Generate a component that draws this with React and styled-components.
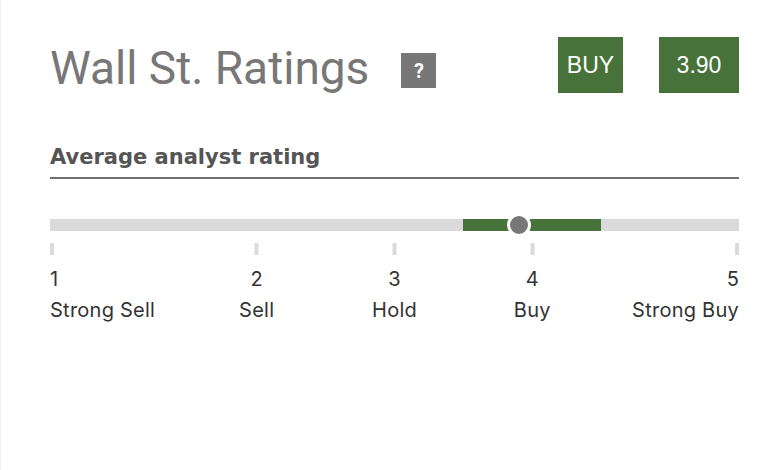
import React from "react";
import styled, { createGlobalStyle } from "styled-components";

// WALL ST. RATINGS CARD

const GlobalStyle = createGlobalStyle`
  html, body {
    margin: 0;
    padding: 0;
    background: #ffffff;
  }
  #root {
    min-height: 100vh;
  }
`;

const GREEN = "#47733a";

const Page = styled.div`
  min-height: 100vh;
  box-sizing: border-box;
  border-left: 1px solid #f3eef0;
  padding: 37px 0 0 49px;
  font-family: Inter, "Noto Sans", sans-serif;
`;

const Card = styled.div`
  width: 689px;
`;

const Header = styled.div`
  display: flex;
  align-items: flex-start;
  height: 56px;
`;

const Title = styled.h1`
  margin: 8px 0 0 0;
  font-family: Roboto, "Liberation Sans", sans-serif;
  font-weight: 400;
  font-size: 46px;
  line-height: 46px;
  color: #777777;
`;

const HelpBadge = styled.span`
  display: flex;
  align-items: center;
  justify-content: center;
  width: 35px;
  height: 35px;
  margin: 16px 0 0 32px;
  background: #777777;
  color: #ffffff;
  font-family: Roboto, "Liberation Sans", sans-serif;
  font-weight: 700;
  font-size: 20px;
`;

const Pills = styled.div`
  display: flex;
  gap: 36px;
  margin-left: auto;
`;

const Pill = styled.div`
  display: flex;
  align-items: center;
  justify-content: center;
  width: ${(p) => p.$width}px;
  height: 56px;
  background: ${GREEN};
  color: #ffffff;
  font-family: "Liberation Sans", Arial, sans-serif;
  font-size: 23px;
`;

const Heading = styled.h2`
  margin: 52px 0 0 0;
  padding-bottom: 8px;
  border-bottom: 2px solid #707070;
  font-family: "DejaVu Sans", Inter, sans-serif;
  font-size: 21px;
  line-height: 24px;
  font-weight: 700;
  color: #555555;
`;

const Track = styled.div`
  position: relative;
  margin-top: 40px;
  height: 12px;
  background: #dadada;
`;

const Range = styled.div`
  position: absolute;
  top: 0;
  bottom: 0;
  background: ${GREEN};
`;

const Dot = styled.div`
  position: absolute;
  top: 50%;
  width: 18px;
  height: 18px;
  border: 3px solid #ffffff;
  border-radius: 50%;
  background: #777777;
  transform: translate(-50%, -50%);
`;

const Scale = styled.div`
  position: relative;
  height: 90px;
  margin-top: 12px;
`;

const Marker = styled.div`
  position: absolute;
  top: 0;
  display: flex;
  flex-direction: column;
  align-items: ${(p) =>
    p.$align === "start" ? "flex-start" : p.$align === "end" ? "flex-end" : "center"};
  transform: translateX(
    ${(p) => (p.$align === "start" ? "0" : p.$align === "end" ? "-100%" : "-50%")}
  );
  white-space: nowrap;
`;

const Tick = styled.span`
  width: 4px;
  height: 12px;
  background: #dadada;
`;

const Value = styled.span`
  margin-top: 13px;
  font-size: 20px;
  line-height: 22px;
  color: #333333;
`;

const Label = styled.span`
  margin-top: 9px;
  font-size: 20px;
  line-height: 22px;
  letter-spacing: 0.25px;
  color: #333333;
`;

const marks = [
  { value: 1, label: "Strong Sell", pos: 0, align: "start" },
  { value: 2, label: "Sell", pos: 30, align: "center" },
  { value: 3, label: "Hold", pos: 50, align: "center" },
  { value: 4, label: "Buy", pos: 70, align: "center" },
  { value: 5, label: "Strong Buy", pos: 100, align: "end" },
];

// map a rating (1-5) onto the uneven scale
const toPercent = (rating) => {
  for (let i = 0; i < marks.length - 1; i++) {
    const a = marks[i];
    const b = marks[i + 1];
    if (rating <= b.value) {
      return a.pos + ((rating - a.value) / (b.value - a.value)) * (b.pos - a.pos);
    }
  }
  return 100;
};

function App() {
  const rating = 3.9;
  // "Buy" zone shown in green
  const rangeFrom = 60;
  const rangeTo = 80;

  return (
    <>
      <GlobalStyle />
      <Page>
        <Card>
          <Header>
            <Title>Wall St. Ratings</Title>
            <HelpBadge>?</HelpBadge>
            <Pills>
              <Pill $width={65}>BUY</Pill>
              <Pill $width={80}>{rating.toFixed(2)}</Pill>
            </Pills>
          </Header>

          <Heading>Average analyst rating</Heading>

          <Track>
            <Range
              style={{ left: `${rangeFrom}%`, width: `${rangeTo - rangeFrom}%` }}
            />
            <Dot style={{ left: `${toPercent(rating)}%` }} />
          </Track>

          <Scale>
            {marks.map((m) => (
              <Marker key={m.value} $align={m.align} style={{ left: `${m.pos}%` }}>
                <Tick />
                <Value>{m.value}</Value>
                <Label>{m.label}</Label>
              </Marker>
            ))}
          </Scale>
        </Card>
      </Page>
    </>
  );
}

export default App;
